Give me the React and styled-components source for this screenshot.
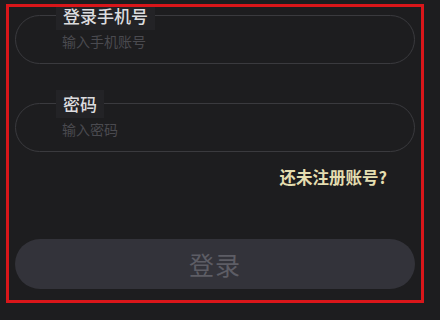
import React from "react";
import styled, { createGlobalStyle } from "styled-components";

const Global = createGlobalStyle`
  html, body { margin: 0; padding: 0; background: #1d1d1f; }
  body { font-family: "Noto Sans CJK SC", "Noto Sans", sans-serif; }
`;

const Page = styled.div`
  width: 440px;
  height: 320px;
  padding: 4px 0 0 6px;
  box-sizing: border-box;
  background: #1d1d1f;
`;

const Frame = styled.div`
  width: 418px;
  height: 299px;
  box-sizing: border-box;
  border: 3px solid #d9161a;
  padding: 8px 6px 0 6px;
  display: flex;
  flex-direction: column;
  overflow: hidden;
`;

const Field = styled.div`
  position: relative;
  height: 49px;
  border: 1.5px solid #3a3a3e;
  border-radius: 25px;
  box-sizing: border-box;
  display: flex;
  align-items: center;
  padding: 3px 0 0 46px;
  margin-top: ${(p) => p.$mt || 0}px;
`;

const Label = styled.span`
  position: absolute;
  left: 40px;
  top: -14px;
  height: 28px;
  line-height: 28px;
  padding: 0 7px;
  background: #232326;
  color: #dcdcdf;
  font-size: 17px;
  font-weight: 500;
`;

const Placeholder = styled.span`
  color: #4a4a4f;
  font-size: 14px;
`;

const LinkRow = styled.div`
  display: flex;
  justify-content: flex-end;
  padding-right: 28px;
  margin-top: 14px;
`;

const Link = styled.span`
  color: #e4ddb0;
  font-size: 16.5px;
  font-weight: 700;
  line-height: 22px;
`;

const Button = styled.div`
  margin-top: 51px;
  height: 50px;
  border-radius: 25px;
  background: #33333a;
  display: flex;
  align-items: center;
  justify-content: center;
  color: #5d5d65;
  font-size: 25px;
  letter-spacing: 1px;
`;

export default function App() {
  return (
    <Page>
      <Global />
      <Frame>
        <Field>
          <Label>登录手机号</Label>
          <Placeholder>输入手机账号</Placeholder>
        </Field>
        <Field $mt={39}>
          <Label>密码</Label>
          <Placeholder>输入密码</Placeholder>
        </Field>
        <LinkRow>
          <Link>还未注册账号?</Link>
        </LinkRow>
        <Button>登录</Button>
      </Frame>
    </Page>
  );
}
